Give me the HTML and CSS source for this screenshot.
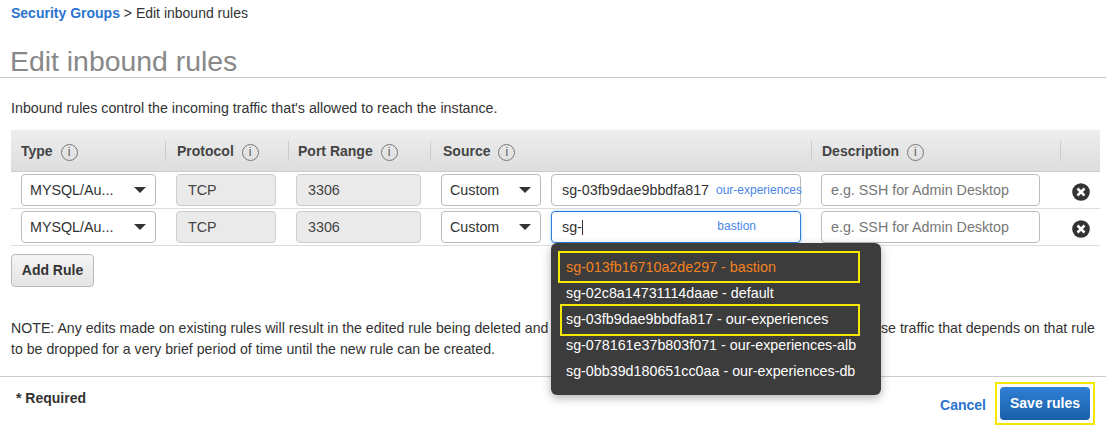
FILE: index.html
```html
<!DOCTYPE html>
<html>
<head><meta charset="utf-8"><link rel="stylesheet" href="styles.css"></head>
<body>
<div class="crumb"><a>Security Groups</a> &gt; Edit inbound rules</div>
<h1>Edit inbound rules</h1>
<p class="intro">Inbound rules control the incoming traffic that's allowed to reach the instance.</p>
<div class="thead">
  <div class="th w-type">Type <i class="inf">i</i></div>
  <div class="th w-proto">Protocol <i class="inf">i</i></div>
  <div class="th w-port">Port Range <i class="inf">i</i></div>
  <div class="th w-src">Source <i class="inf">i</i></div>
  <div class="th w-desc">Description <i class="inf">i</i></div>
  <div class="th w-x"></div>
</div>
<div class="row">
  <div class="sel s-type">MYSQL/Au...<b></b></div>
  <div class="ro">TCP</div>
  <div class="ro port">3306</div>
  <div class="sel s-cust">Custom<b></b></div>
  <div class="inp">sg-03fb9dae9bbdfa817<span class="tag">our-experiences</span></div>
  <div class="desc">e.g. SSH for Admin Desktop</div>
  <svg class="x" width="18" height="18" viewBox="0 0 18 18"><circle cx="9" cy="9" r="8.800" fill="#333"/><path d="M5.500 5.500l7 7M12.500 5.500l-7 7" stroke="#fff" stroke-width="2.500"/></svg>
</div>
<div class="row">
  <div class="sel s-type">MYSQL/Au...<b></b></div>
  <div class="ro">TCP</div>
  <div class="ro port">3306</div>
  <div class="sel s-cust">Custom<b></b></div>
  <div class="inp focus">sg-<span class="caret"></span><span class="tag t2">bastion</span></div>
  <div class="desc">e.g. SSH for Admin Desktop</div>
  <svg class="x" width="18" height="18" viewBox="0 0 18 18"><circle cx="9" cy="9" r="8.800" fill="#333"/><path d="M5.500 5.500l7 7M12.500 5.500l-7 7" stroke="#fff" stroke-width="2.500"/></svg>
</div>
<div class="add">Add Rule</div>
<p class="note">NOTE: Any edits made on existing rules will result in the edited rule being deleted and a new rule created with the new details. This will cause traffic that depends on that rule to be dropped for a very brief period of time until the new rule can be created.</p>
<div class="menu">
  <div class="opt hot box-a">sg-013fb16710a2de297 - bastion</div>
  <div class="opt">sg-02c8a14731114daae - default</div>
  <div class="opt box-b">sg-03fb9dae9bbdfa817 - our-experiences</div>
  <div class="opt">sg-078161e37b803f071 - our-experiences-alb</div>
  <div class="opt">sg-0bb39d180651cc0aa - our-experiences-db</div>
</div>
<div class="foot">
  <span class="req">* Required</span>
  <span class="cancel">Cancel</span>
  <span class="savebox"><span class="save">Save rules</span></span>
</div>
</body>
</html>
```
FILE: styles.css
```css
*{box-sizing:border-box}
html,body{margin:0;padding:0}
body{width:1106px;height:430px;overflow:hidden;background:#fff;font-family:"Liberation Sans",Arial,sans-serif;font-size:14.300px;color:#333;position:relative}
.crumb{padding:5px 0 0 11px;height:32px;line-height:17px;font-size:14px}
.crumb a{color:#2a74d0;font-weight:700}
h1{margin:13px 0 0;padding:0 0 0 10px;font-size:28.400px;font-weight:400;color:#888;height:33px;line-height:32px;border-bottom:1px solid #c4c4c4}
.intro{margin:22px 0 0 11px;line-height:16px;height:30px;font-size:14.250px}
.thead{display:flex;height:42px;margin:0 6px 0 11px;background:linear-gradient(#eee,#ddd);border-bottom:1px solid #ccc;align-items:center;font-weight:700;color:#444}
.th{height:20px;line-height:20px;padding-left:11px;border-left:1px solid #ccc;font-size:14px}
.inf{display:inline-block;width:17px;height:17px;margin-left:4px;border:1px solid #777;border-radius:50%;font:400 12px/15px "Liberation Sans",sans-serif;text-align:center;vertical-align:0;color:#555}
.w-type{width:154px;border-left:0;padding-left:10px}
.w-proto{width:123px}
.w-port{width:142px;padding-left:9px}
.w-src{width:381px;padding-left:12px}
.w-desc{width:249px;padding-left:10px}
.w-x{flex:1}
.row{display:flex;align-items:center;height:37px;margin:0 6px 0 11px;padding-left:10px;border-bottom:1px solid #ddd}
.sel{position:relative;height:32px;line-height:30px;padding-left:8px;border:1px solid #bbb;border-radius:4px;background:#fff}
.sel b{position:absolute;right:9px;top:12px;border:6px solid transparent;border-top:6px solid #333;border-bottom:0}
.s-type{width:135px}
.s-cust{width:100px;margin-left:20px}
.ro{width:100px;height:32px;line-height:30px;margin-left:20px;padding-left:11px;background:#eaeaea;border:1px solid #ccc;border-radius:4px;color:#444}
.port{width:125px;margin-left:20px}
.inp{position:relative;width:250px;height:32px;line-height:30px;margin-left:10px;padding-left:10px;border:1px solid #bbb;border-radius:4px}
.focus{border-color:#2a7fd8;box-shadow:0 0 3px #9cc4f0}
.tag{position:absolute;right:-2px;top:0;font-size:12px;color:#4a86e8}
.t2{right:44px;top:-1px}
.caret{display:inline-block;width:1px;height:15px;background:#333;vertical-align:-3px}
.desc{width:219px;height:32px;line-height:30px;margin-left:20px;padding-left:9px;border:1px solid #bbb;border-radius:4px;color:#777}
.x{margin:3px 0 0 32px}
.add{width:83px;height:33px;line-height:31px;margin:8px 0 0 11px;text-align:center;font-weight:700;background:linear-gradient(#f4f4f4,#e4e4e4);border:1px solid #bbb;border-radius:4px;font-size:14px}
.note{margin:31px 0 0 11px;width:1090px;line-height:21px;font-size:14.160px}
.menu{position:absolute;z-index:2;left:551px;top:243px;width:330px;height:152px;padding:11px 0 0;background:#3c3c3c;border-radius:6px;color:#fff;box-shadow:0 3px 10px rgba(0,0,0,.3)}
.opt{height:26px;line-height:26px;padding-left:15px;position:relative}
.hot{color:#f5821f}
.box-a::after,.box-b::after{content:"";position:absolute;right:21px;border:2px solid #f5e800}
.box-a::after{left:7px;top:-3px;bottom:-3px}
.box-b::after{left:9px;top:-2px;bottom:-4px}
.foot{position:absolute;left:0;right:0;top:376px;height:54px;border-top:1px solid #ccc;display:flex;align-items:flex-start}
.req{margin:13px 0 0 16px;font-weight:700;font-size:14px;line-height:16px;color:#333}
.cancel{margin:20px 0 0 auto;color:#2a74d0;font-weight:700;font-size:14px;line-height:16px}
.savebox{margin:5px 11px 0 9px;width:100px;height:43px;padding:3px;border:2px solid #f5e800}
.save{display:block;height:33px;line-height:33px;text-align:center;color:#fff;font-weight:700;background:linear-gradient(#2f7fd6,#1a5fa8);border-radius:4px;font-size:14px}
```
